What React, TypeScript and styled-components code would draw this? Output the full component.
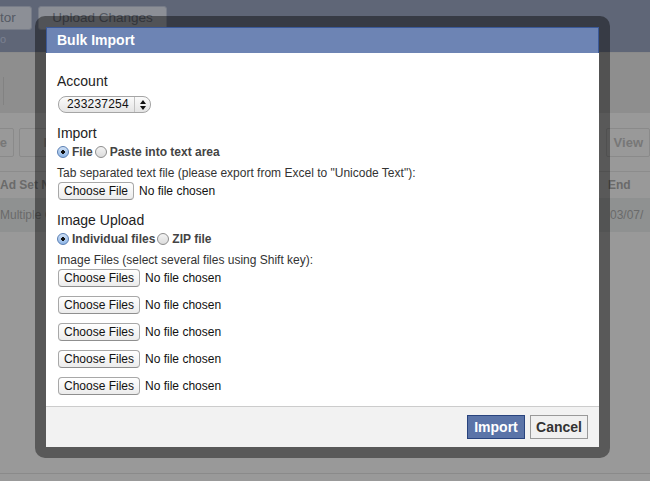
import { createGlobalStyle, styled } from "styled-components";

const GlobalStyle = createGlobalStyle`
  html, body {
    margin: 0;
    padding: 0;
    background: #999999;
  }
  body {
    font-family: "Liberation Sans", Arial, sans-serif;
  }
`;

const imageRows = [1, 2, 3, 4, 5];

const App = (): JSX.Element => {
  return (
    <Page>
      <GlobalStyle />
      <TopBar>
        <TopRow>
          <BarButton $w={37}>tor</BarButton>
          <BarButton $w={129} $center>
            Upload Changes
          </BarButton>
        </TopRow>
        <TopLink>o</TopLink>
      </TopBar>
      <ToolBand>
        <EdgeButton />
      </ToolBand>
      <ActionRow>
        <ActionGroup>
          <ActionButton $w={14}>e</ActionButton>
          <ActionButton $w={40}>Re</ActionButton>
        </ActionGroup>
        <ActionButton $w={36}>View</ActionButton>
      </ActionRow>
      <TableHead>
        <span>Ad Set N</span>
        <span>End</span>
      </TableHead>
      <TableRow>
        <span>Multiple C</span>
        <span>03/07/</span>
      </TableRow>
      <PageRest />

      <Frame>
        <Dialog>
          <Header>Bulk Import</Header>
          <Body>
            <SectionLabel>Account</SectionLabel>
            <Select>
              <SelectValue>233237254</SelectValue>
              <SelectArrows>
                <svg width="6" height="10" viewBox="0 0 6 10">
                  <path d="M3 0 L6 4 L0 4 Z" fill="#111" />
                  <path d="M3 10 L6 6 L0 6 Z" fill="#111" />
                </svg>
              </SelectArrows>
            </Select>

            <SectionLabel $top={10}>Import</SectionLabel>
            <RadioRow>
              <Radio $checked />
              <RadioText>File</RadioText>
              <Radio />
              <RadioText>Paste into text area</RadioText>
            </RadioRow>
            <Hint>Tab separated text file (please export from Excel to "Unicode Text"):</Hint>
            <FileRow>
              <FileButton>Choose File</FileButton>
              <FileStatus>No file chosen</FileStatus>
            </FileRow>

            <SectionLabel $top={10}>Image Upload</SectionLabel>
            <RadioRow>
              <Radio $checked />
              <RadioText>Individual files</RadioText>
              <Radio />
              <RadioText>ZIP file</RadioText>
            </RadioRow>
            <Hint>Image Files (select several files using Shift key):</Hint>
            <FileList>
              {imageRows.map((n) => (
                <FileRow key={n}>
                  <FileButton>Choose Files</FileButton>
                  <FileStatus>No file chosen</FileStatus>
                </FileRow>
              ))}
            </FileList>
          </Body>
          <Footer>
            <PrimaryButton>Import</PrimaryButton>
            <CancelButton>Cancel</CancelButton>
          </Footer>
        </Dialog>
      </Frame>
    </Page>
  );
};

export default App;

const Page = styled.div`
  position: relative;
  width: 650px;
  height: 481px;
  overflow: hidden;
  background: #999999;
  display: flex;
  flex-direction: column;
`;

const TopBar = styled.div`
  height: 52px;
  background: #5f6677;
  padding-top: 6px;
  box-sizing: border-box;
`;

const TopRow = styled.div`
  display: flex;
  gap: 6px;
  margin-left: -5px;
`;

const BarButton = styled.div<{ $w: number; $center?: boolean }>`
  flex: none;
  width: ${(p) => p.$w}px;
  height: 24px;
  box-sizing: border-box;
  padding: ${(p) => (p.$center ? "0" : "0 0 0 4px")};
  background: #8c8f96;
  border: 1px solid #777c88;
  border-radius: 3px;
  color: #555a64;
  font-size: 13.5px;
  line-height: 22px;
  white-space: nowrap;
  text-align: ${(p) => (p.$center ? "center" : "left")};
`;

const TopLink = styled.div`
  margin-top: 3px;
  color: #7b8191;
  font-size: 11px;
`;

const ToolBand = styled.div`
  height: 61px;
  background: #8e8e8e;
  border-top: 1px solid #8a8a8a;
  box-sizing: border-box;
  padding-top: 24px;
`;

const EdgeButton = styled.div`
  width: 3px;
  height: 28px;
  border-right: 1px solid #828282;
`;

const ActionRow = styled.div`
  height: 59px;
  display: flex;
  justify-content: space-between;
  align-items: center;
  border-bottom: 1px solid #8c8c8c;
  box-sizing: border-box;
`;

const ActionGroup = styled.div`
  display: flex;
  gap: 5px;
`;

const ActionButton = styled.div<{ $w: number }>`
  width: ${(p) => p.$w}px;
  height: 27px;
  border: 1px solid #8a8a8a;
  border-radius: 2px;
  color: #777;
  font-size: 13px;
  font-weight: bold;
  line-height: 27px;
  text-align: right;
  padding-right: 6px;
  white-space: nowrap;
  &:first-child {
    margin-left: -8px;
  }
`;

const TableHead = styled.div`
  height: 26px;
  display: flex;
  justify-content: space-between;
  align-items: center;
  color: #6a6a6a;
  font-size: 12px;
  font-weight: bold;
  padding-right: 2px;
  box-sizing: border-box;
  span:last-child {
    width: 40px;
  }
`;

const TableRow = styled.div`
  height: 34px;
  background: #8f9191;
  display: flex;
  justify-content: space-between;
  align-items: center;
  color: #6a6a6a;
  font-size: 12px;
  span:last-child {
    width: 40px;
  }
`;

const PageRest = styled.div`
  flex: 1;
  border-bottom: 1px solid #8a8a8a;
  margin-bottom: 7px;
`;

const Frame = styled.div`
  position: absolute;
  left: 35px;
  top: 16px;
  width: 575px;
  height: 442px;
  box-sizing: border-box;
  padding: 11px;
  background: rgba(0, 0, 0, 0.42);
  border-radius: 10px;
`;

const Dialog = styled.div`
  background: #ffffff;
  display: flex;
  flex-direction: column;
  height: 100%;
`;

const Header = styled.div`
  height: 26px;
  box-sizing: border-box;
  background: #6d84b4;
  border: 1px solid #3b5998;
  border-bottom: none;
  color: #ffffff;
  font-size: 14px;
  font-weight: bold;
  line-height: 25px;
  padding-left: 10px;
`;

const Body = styled.div`
  flex: 1;
  padding: 18px 11px 0;
  display: flex;
  flex-direction: column;
  align-items: flex-start;
  color: #333333;
`;

const SectionLabel = styled.div<{ $top?: number }>`
  font-size: 14px;
  line-height: 20px;
  color: #222;
  margin-top: ${(p) => p.$top ?? 0}px;
`;

const Select = styled.div`
  margin: 5px 0 0 1px;
  height: 17px;
  width: 93px;
  box-sizing: border-box;
  display: flex;
  border: 1px solid #a5a5a5;
  border-radius: 8px;
  background: linear-gradient(#fbfbfb, #e4e4e4);
`;

const SelectValue = styled.div`
  flex: 1;
  font-size: 12px;
  line-height: 15px;
  color: #111;
  padding-left: 8px;
  letter-spacing: 0.2px;
`;

const SelectArrows = styled.div`
  width: 15px;
  border-left: 1px solid #c2c2c2;
  display: flex;
  align-items: center;
  justify-content: center;
`;

const RadioRow = styled.div`
  display: flex;
  align-items: center;
  height: 14px;
  margin-top: 2px;
`;

const Radio = styled.span<{ $checked?: boolean }>`
  flex: none;
  width: 12px;
  height: 12px;
  box-sizing: border-box;
  border-radius: 50%;
  border: 1px solid ${(p) => (p.$checked ? "#5a7fb4" : "#8d8d8d")};
  background: ${(p) =>
    p.$checked
      ? "radial-gradient(circle, #111 0 1.6px, transparent 2px), linear-gradient(#cfe0f5, #8fb6e6)"
      : "linear-gradient(#f3f3f3, #dcdcdc)"};
`;

const RadioText = styled.span`
  font-size: 12px;
  font-weight: bold;
  color: #444;
  margin: 0 2px 0 3px;
`;

const Hint = styled.div`
  font-size: 12px;
  line-height: 14px;
  color: #333;
  margin-top: 7px;
`;

const FileList = styled.div`
  display: flex;
  flex-direction: column;
  gap: 7px;
`;

const FileRow = styled.div`
  display: flex;
  align-items: center;
  gap: 5px;
  margin-top: 2px;
  height: 18px;
`;

const FileButton = styled.div`
  height: 18px;
  box-sizing: border-box;
  padding: 0 5px;
  margin-left: 1px;
  border: 1px solid #a8a8a8;
  border-bottom-color: #8f8f8f;
  border-radius: 4px;
  background: linear-gradient(#ffffff, #ececec);
  font-size: 12px;
  line-height: 17px;
  color: #111;
`;

const FileStatus = styled.span`
  font-size: 12px;
  color: #111;
`;

const Footer = styled.div`
  height: 41px;
  box-sizing: border-box;
  background: #f2f2f2;
  border-top: 1px solid #cccccc;
  display: flex;
  justify-content: flex-end;
  align-items: center;
  gap: 5px;
  padding: 0 11px 0 0;
`;

const FooterButton = styled.div`
  width: 58px;
  height: 24px;
  box-sizing: border-box;
  font-size: 14px;
  font-weight: bold;
  line-height: 22px;
  text-align: center;
`;

const PrimaryButton = styled(FooterButton)`
  background: #5b74a8;
  border: 1px solid #29447e;
  color: #ffffff;
`;

const CancelButton = styled(FooterButton)`
  background: #f0f0f0;
  border: 1px solid #999999;
  color: #333333;
`;
